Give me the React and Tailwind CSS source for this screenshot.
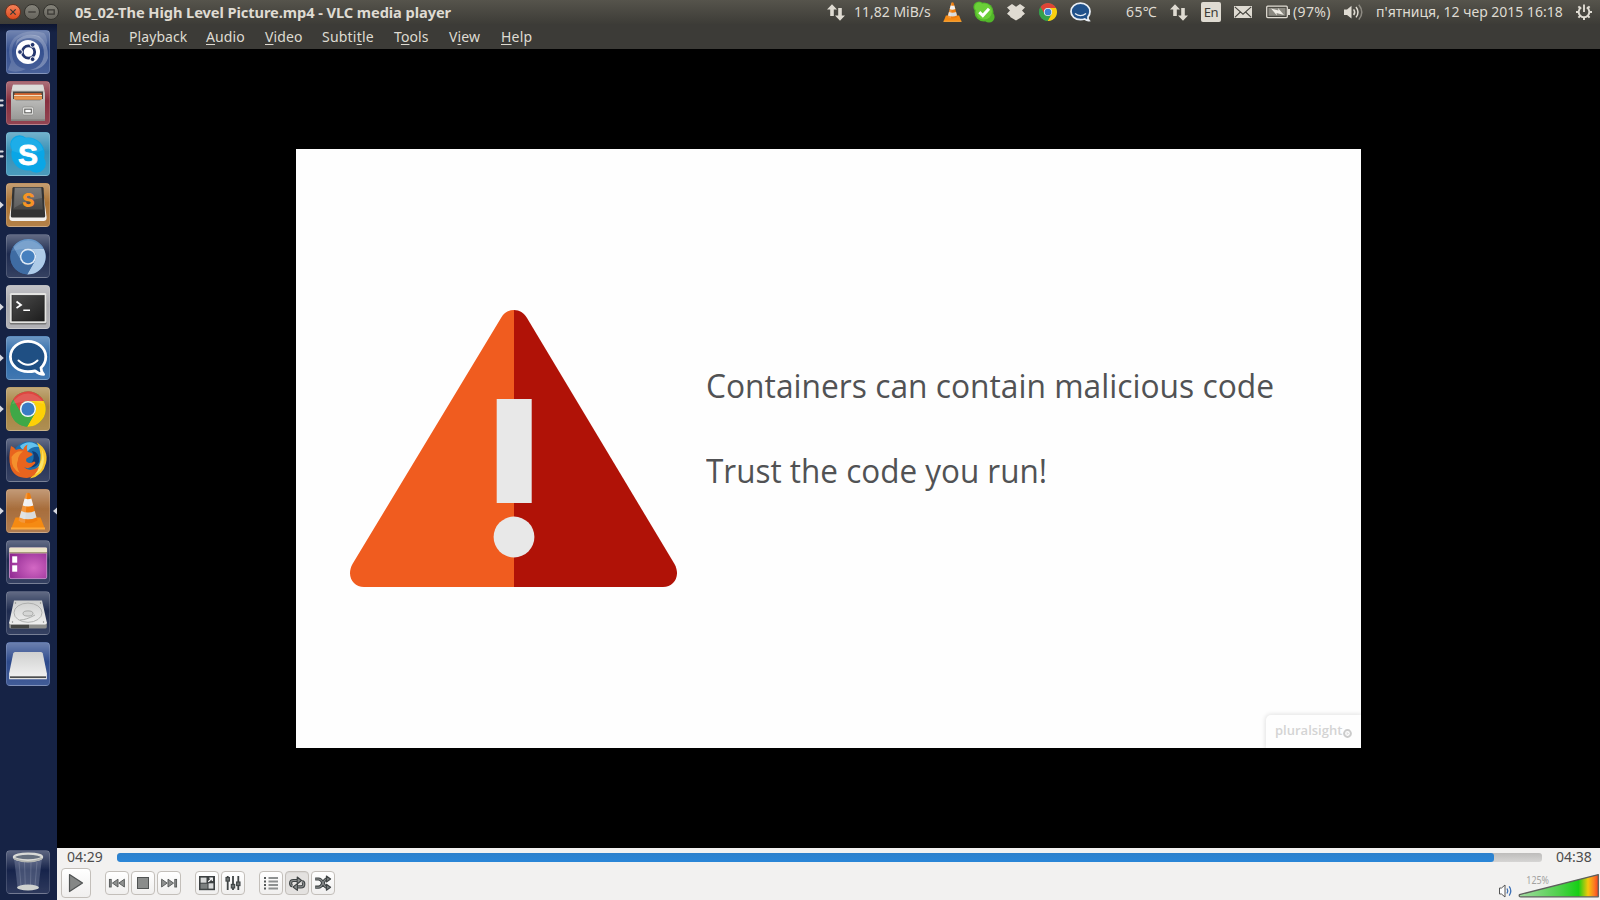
import React from "react";

const ink = "#dfdbd2";

/* ---------- shared drawings ---------- */

function ChromeMark({ colors, cx, cy, r }) {
  const k = r / 17.5;
  const d = "M-14.7 -9.5 A17.5 17.5 0 0 1 15.56 -8 L0 -8 A8 8 0 0 0 -6.9 4 Z";
  return (
    <g transform={`translate(${cx} ${cy}) scale(${k})`}>
      <circle r="17.4" fill={colors[2]} />
      <path d={d} fill={colors[0]} />
      <path d={d} fill={colors[1]} transform="rotate(120)" />
      <path d={d} fill={colors[2]} transform="rotate(240)" />
      <circle r="8" fill={colors[3]} />
      <circle r="6.5" fill={colors[4]} />
    </g>
  );
}

function Cone() {
  return (
    <g>
      <path d="M9.5 28.5 H34.5 L39 40 H5 Z" fill="#f58a12" />
      <path d="M5 38.6 H39 V40.6 H5 Z" fill="#ffab3d" />
      <path d="M20 4.5 Q22 2.8 24 4.5 L31.5 31.5 Q22 37 12.5 31.5 Z" fill="#f07d0c" />
      <path d="M18.6 9.5 Q22 11 25.4 9.5 L27.3 16.4 Q22 18.6 16.7 16.4 Z" fill="#f1f1f1" />
      <path d="M15.3 22 Q22 25 28.7 22 L30.5 28.4 Q22 32.3 13.5 28.4 Z" fill="#d9dcdd" />
      <path d="M20 4.5 Q21 3.5 21.5 3.7 L19 34 Q15 33.5 12.5 31.5 Z" fill="#fff" opacity=".2" />
    </g>
  );
}

/* ---------- launcher icons, each on a 44 x 44 grid ---------- */

const DashIcon = () => (
  <>
    <path d="M2 40 Q10 44 20 39 Q6 37 6 22 Q6 7 22 5 Q36 5 40 16 Q43 8 38 3 Q20 -2 8 8 Q0 18 5 32 Z" fill="#fff" opacity=".16" />
    <path d="M8 22 Q10 8 24 8 Q38 9 38 24 Q37 37 24 40 Q38 40 42 28 Q43 14 33 6 Q20 2 11 10 Z" fill="#fff" opacity=".28" />
    <circle cx="22" cy="22" r="12" fill="#fff" />
    <circle cx="22.5" cy="22" r="6.2" fill="none" stroke="#25376e" strokeWidth="2.8" />
    <g fill="#25376e" stroke="#fff" strokeWidth="1">
      <circle cx="14" cy="22" r="2.4" />
      <circle cx="26.6" cy="14.8" r="2.4" />
      <circle cx="26.6" cy="29.2" r="2.4" />
    </g>
  </>
);

const FilesIcon = () => (
  <>
    <path d="M7 3.8 H37 L39 12 V40 H5 V12 Z" fill="#c2c2c0" />
    <path d="M7 3.8 H37 L38.4 9.5 H5.6 Z" fill="#dcdcda" />
    <rect x="7" y="10.5" width="30" height="9" fill="#4a4642" />
    <rect x="8.5" y="12.2" width="27" height="2.4" fill="#d9682f" />
    <rect x="8" y="14" width="28" height="1.2" fill="#f3dcc0" />
    <rect x="8" y="15.2" width="28" height="3.6" fill="#ea924a" />
    <path d="M5 18 H8 L10 19.5 H34 L36 18 H39 V40 H5 Z" fill="url(#cabinet)" />
    <rect x="5" y="38.3" width="34" height="1.7" fill="#83827f" />
    <rect x="16.5" y="26" width="11" height="8" rx="1.5" fill="#dededc" stroke="#7f7f7d" strokeWidth=".6" />
    <rect x="18.8" y="28.2" width="6.5" height="3.6" fill="#fff" stroke="#555553" strokeWidth="1" />
  </>
);

const SkypeIcon = () => (
  <>
    <g fill="#0aa6e6">
      <circle cx="22" cy="22" r="16.6" />
      <circle cx="13.5" cy="12.5" r="9.3" />
      <circle cx="30.5" cy="31.5" r="9.3" />
    </g>
    <path d="M5 12 A9 9 0 0 1 19 6 A16 16 0 0 1 37 18 Q22 25 6 19 Z" fill="#fff" opacity=".08" />
    <text x="22" y="32.6" textAnchor="middle" fontSize="30" fontWeight="700" fill="#fff" stroke="#fff" strokeWidth=".8" fontFamily="'Liberation Sans', sans-serif">S</text>
  </>
);

const SublimeIcon = () => (
  <>
    <path d="M7.4 4.5 H36.6 L40.6 34 Q41 38 37.5 38 H6.5 Q3 38 3.4 34 Z" fill="#f2f0ed" />
    <path d="M7.8 4 H36.2 Q37.4 4 37.6 5.4 L39.2 33 Q39.2 34.6 37.6 34.6 H6.4 Q4.8 34.6 4.8 33 L6.4 5.4 Q6.6 4 7.8 4 Z" fill="#333" />
    <path d="M8.6 4.6 H35.4 L36.8 26.5 H7.2 Z" fill="url(#keyFace)" />
    <path d="M9 5 H35 L36 15 Q20 17 8 25 Z" fill="#fff" opacity=".12" />
    <text x="22.3" y="24" textAnchor="middle" fontSize="19" fontWeight="800" fill="#f79425" fontFamily="Inter, sans-serif">S</text>
  </>
);

const ChromiumIcon = () => (
  <>
    <ChromeMark cx={22} cy={22.7} r={17.7} colors={["#6896c7", "#aecbe8", "#3f6ca3", "#dfeaf6", "#4680bf"]} />
    <path d="M6 17 A17.5 17.5 0 0 1 38 17 Q22 12 6 17 Z" fill="#fff" opacity=".12" />
  </>
);

const TerminalIcon = () => (
  <>
    <rect x="3.7" y="8.5" width="36.8" height="31" rx="1.5" fill="#777" />
    <rect x="3.7" y="8" width="36.8" height="30" rx="1.5" fill="#e4e4e2" />
    <rect x="6" y="10.5" width="32.2" height="25.5" fill="url(#screen)" stroke="#1c1c1c" strokeWidth=".6" />
    <path d="M10.5 16.5 L15 20 L10.5 23" fill="none" stroke="#fff" strokeWidth="1.8" />
    <path d="M17.3 25.2 H24" stroke="#fff" strokeWidth="1.6" />
  </>
);

const HipChatIcon = () => (
  <>
    <path d="M22 5.4 C12.5 5.4 4.4 12 4.4 20.8 C4.4 29.6 12.5 35.6 22 35.6 Q26 35.6 29 34.8 Q33 38.4 37.6 38.4 Q35 35.6 35 31.8 Q39.8 27.4 39.8 20.8 C39.8 12 31.5 5.4 22 5.4 Z" fill="#1f4f83" stroke="#fff" strokeWidth="2.8" strokeLinejoin="round" />
    <path d="M12.5 24.5 Q22 33 31.5 24.5" fill="none" stroke="#fff" strokeWidth="2" strokeLinecap="round" />
  </>
);

const ChromeIcon = () => (
  <>
    <ChromeMark cx={22} cy={22} r={17.7} colors={["#dd4640", "#fdd007", "#3fa847", "#f7f7f7", "#3a7bc4"]} />
    <path d="M6 17 A17.5 17.5 0 0 1 38 17 Q22 12 6 17 Z" fill="#fff" opacity=".12" />
  </>
);

const FirefoxIcon = () => (
  <>
    <circle cx="23" cy="20" r="16.5" fill="#1b6fae" />
    <path d="M14 8 Q24 0 34 9 Q26 8 22 13 Q16 13 14 8 Z" fill="#62c2ee" />
    <path d="M26 13 Q34 14 33 24 Q30 31 22 29 Q31 21 26 13 Z" fill="#123c73" />
    <path d="M31 4.5 Q43 12 40 25 Q37 38 24 40.5 Q30 34 33 28 Q37 17 31 4.5 Z" fill="#f8c62b" />
    <path d="M35.5 10 Q38 20 33 28 Q28 35 20 35 Q30 40 36 30 Q40 21 35.5 10 Z" fill="#fbe56a" />
    <path d="M5 8 Q8 9 10 12 Q14 10 17 12 Q18 8 21.5 6.5 Q20 11 22 14 Q27 15 26.5 17 L20.5 20.5 Q19 24 23 25 Q26 25 28 23.5 Q31 24.5 27.5 27 Q23 32 18 29 Q23 35 33 29 Q30 39 21 40 Q8 40 4.5 29 Q2 20 5 8 Z" fill="#e8641e" />
    <path d="M5.5 19 Q10 12 17 13.5 Q12 17 12 22 Q9 28 14 35 Q5 31 5.5 19 Z" fill="#f4902d" />
  </>
);

const DesktopIcon = () => (
  <>
    <rect x="3.5" y="8" width="37.2" height="30.6" rx="1.5" fill="url(#purple)" stroke="#e8a4e2" strokeWidth=".7" />
    <rect x="3.2" y="7.6" width="37.8" height="5.6" rx="1" fill="#ece5c9" />
    <rect x="3.2" y="12" width="37.8" height="1.3" fill="#a89d7d" />
    <rect x="6.2" y="16.3" width="5" height="6.4" fill="#fff" />
    <rect x="6.2" y="25.3" width="5" height="6.4" fill="#fff" />
  </>
);

const HardDiskIcon = () => (
  <>
    <path d="M3.2 31 H40.8 V36 Q40.8 37.5 39 37.5 H5 Q3.2 37.5 3.2 36 Z" fill="#8d8e8c" />
    <path d="M8 9.5 H36 L40.8 31.5 Q41 33.5 39 33.5 H5 Q3 33.5 3.2 31.5 Z" fill="url(#metal)" />
    <rect x="5" y="33.8" width="18" height="3.4" fill="#454644" />
    <ellipse cx="22" cy="21.7" rx="14" ry="9.6" fill="none" stroke="#a3a5a3" strokeWidth=".8" />
    <ellipse cx="22" cy="22.5" rx="5" ry="2.6" fill="#d5d6d5" stroke="#999b99" strokeWidth=".8" />
    <path d="M14 29 Q20 29 29 24" fill="none" stroke="#a5a7a5" strokeWidth=".9" />
    <g fill="#858785">
      <circle cx="9.5" cy="12" r=".7" /><circle cx="34.5" cy="12" r=".7" />
      <circle cx="6.5" cy="31" r=".7" /><circle cx="37.5" cy="31" r=".7" />
    </g>
  </>
);

const RemovableIcon = () => (
  <>
    <path d="M3.2 32.5 H40.8 V37.2 H3.2 Z" fill="#f2f2f2" />
    <path d="M9 10 H35 Q36.4 10 36.8 11.5 L41 32 Q41 34 39 34 H5 Q3 34 3 32 L7.2 11.5 Q7.6 10 9 10 Z" fill="url(#metal)" />
    <rect x="4" y="34.3" width="36" height="1.8" fill="#4c4e4f" />
  </>
);

const TrashIcon = () => (
  <>
    <path d="M8 8 L11.5 37 Q22 43 32.5 37 L36 8 Z" fill="#a9b2cc" opacity=".3" />
    <path d="M13 12 L15 36 M18.5 12 L19.3 36 M25 12 L24.5 36 M31 12 L29 36" stroke="#dfe4f2" strokeWidth=".8" opacity=".22" />
    <ellipse cx="22" cy="37.5" rx="11" ry="3" fill="#cfd2cf" />
    <ellipse cx="22" cy="7" rx="14" ry="3.4" fill="#66707e" stroke="#d9dad6" strokeWidth="2.4" />
    <path d="M8 8.5 Q22 15 36 8.5" fill="none" stroke="#b4b6b2" strokeWidth="1.4" />
  </>
);

const launcher = [
  { name: "Dash", Icon: DashIcon, tile: "bg-[#35508f]", left: 0 },
  { name: "Files", Icon: FilesIcon, tile: "bg-[#87303f]", left: 2 },
  { name: "Skype", Icon: SkypeIcon, tile: "bg-[#3790b6]", left: 2 },
  { name: "Sublime Text", Icon: SublimeIcon, tile: "bg-[#ab7334]", left: 1 },
  { name: "Chromium", Icon: ChromiumIcon, tile: "bg-[#1f2c50]", left: 0 },
  { name: "Terminal", Icon: TerminalIcon, tile: "bg-[#a9a9ae]", left: 1 },
  { name: "HipChat", Icon: HipChatIcon, tile: "bg-[#2c69a9]", left: 1 },
  { name: "Chrome", Icon: ChromeIcon, tile: "bg-[#a68340]", left: 1 },
  { name: "Firefox", Icon: FirefoxIcon, tile: "bg-[#222f54]", left: 0 },
  { name: "VLC", Icon: Cone, tile: "bg-[#a86e3c]", left: 1, right: true },
  { name: "Desktop", Icon: DesktopIcon, tile: "bg-[#1f2c50]", left: 0 },
  { name: "Disk", Icon: HardDiskIcon, tile: "bg-[#1f2c50]", left: 0 },
  { name: "Removable", Icon: RemovableIcon, tile: "bg-[#2d4a8c]", left: 0 },
];

function LauncherItem({ Icon, tile, left, right }) {
  return (
    <div className="flex h-[44px] w-[57px] shrink-0 items-center">
      <svg className="h-[44px] w-[6px] shrink-0" viewBox="0 0 6 44">
        {left === 1 && <path d="M0 18.6 L3.8 22 L0 25.4 Z" fill="#d7d9e0" />}
        {left === 2 && <path d="M0 18.4 H3 L3.8 19.5 L3 20.6 H0 Z M0 23.2 H3 L3.8 24.3 L3 25.4 H0 Z" fill="#d7d9e0" />}
      </svg>
      <div className={`h-[44px] w-[44px] shrink-0 overflow-hidden rounded-[4px] ${tile}`}>
        <div className="h-[44px] w-[44px] rounded-[4px] border border-white/15 bg-linear-to-b from-white/30 via-white/0 via-45% to-white/10">
          <svg className="-m-px h-[44px] w-[44px]" viewBox="0 0 44 44"><Icon /></svg>
        </div>
      </div>
      <svg className="h-[44px] w-[7px] shrink-0" viewBox="0 0 7 44">
        {right && <path d="M7 18.6 L3 22 L7 25.4 Z" fill="#d7d9e0" />}
      </svg>
    </div>
  );
}

function Launcher() {
  return (
    <div className="flex w-[57px] shrink-0 flex-col justify-between bg-linear-to-b from-[#0d1530] from-0% to-[#162345] to-1% pt-[6px] pb-[6px]">
      <div className="flex flex-col gap-[7px]">
        {launcher.map((it) => <LauncherItem key={it.name} {...it} />)}
      </div>
      <LauncherItem Icon={TrashIcon} tile="bg-[#17244b]" left={0} />
    </div>
  );
}

/* ---------- top panel ---------- */

function NetArrows() {
  return (
    <svg className="h-[24px] w-[18px] shrink-0" viewBox="0 0 18 24" fill={ink}>
      <path d="M5 4.2 L10 9.4 H6.8 V16 H3.2 V9.4 H0 Z" />
      <path d="M13 20.8 L18 15.6 H14.8 V8 H11.2 V15.6 H8 Z" />
    </svg>
  );
}

const windowButtons = [
  { k: "close", cls: "bg-linear-to-b from-[#f58157] to-[#dd4a1b] border-[#6d3320]", d: "M5 5 L10 10 M10 5 L5 10" },
  { k: "min", cls: "bg-linear-to-b from-[#85837a] to-[#66645d] border-[#34332e]", d: "M4 7.5 H11" },
  { k: "max", cls: "bg-linear-to-b from-[#85837a] to-[#66645d] border-[#34332e]", d: "M4.5 5.5 H10.5 V9.5 H4.5 Z" },
];

function TopPanel() {
  return (
    <div className="flex h-[24px] w-[1600px] shrink-0 items-center bg-linear-to-b from-[#56544c] to-[#3d3c37] text-[14px] leading-[24px] whitespace-nowrap text-[#dfdbd2]">
      <div className="flex w-[75px] shrink-0 gap-[3px] pl-[5px]">
        {windowButtons.map((b) => (
          <div key={b.k} className={`h-[16px] w-[16px] rounded-full border ${b.cls}`}>
            <svg className="-m-px h-[16px] w-[16px]" viewBox="0 0 15 15"><path d={b.d} fill="none" stroke="#3a3834" strokeWidth="1.2" /></svg>
          </div>
        ))}
      </div>
      <div className="w-[752px] shrink-0 text-[14.67px] font-bold tracking-[-0.09px]">05_02-The High Level Picture.mp4 - VLC media player</div>
      <div className="w-[27px] shrink-0"><NetArrows /></div>
      <div className="w-[89px] shrink-0">11,82 MiB/s</div>
      <div className="w-[30px] shrink-0">
        <svg className="h-[22px] w-[19px]" viewBox="4 2 36 40"><Cone /></svg>
      </div>
      <div className="w-[34px] shrink-0">
        <svg className="h-[24px] w-[22px]" viewBox="0 0 22 24">
          <g fill="#52b82a"><circle cx="11" cy="12" r="9.5" /><circle cx="6" cy="7" r="5.6" /><circle cx="16" cy="17" r="5.6" /></g>
          <g fill="#6bcf38"><circle cx="11" cy="11.5" r="8" /><circle cx="6" cy="7" r="4.4" /></g>
          <path d="M6.3 12.2 L9.8 15.6 L16 8.8" fill="none" stroke="#fff" strokeWidth="3" />
        </svg>
      </div>
      <div className="w-[32px] shrink-0">
        <svg className="h-[24px] w-[18px]" viewBox="0 0 18 24" fill={ink}>
          <path d="M5 4 L9 6.8 L13 4 L18 7.6 L15 10.6 L18 13.8 L14.8 16.2 V17 L9 20.6 L3.2 17 V16.2 L0 13.8 L3 10.6 L0 7.6 Z" />
        </svg>
      </div>
      <div className="w-[31px] shrink-0">
        <svg className="h-[24px] w-[18px]" viewBox="0 0 18 24">
          <ChromeMark cx={9} cy={12} r={9} colors={["#dd4437", "#fbcf0f", "#35a04a", "#f7f7f7", "#3b7fd0"]} />
        </svg>
      </div>
      <div className="w-[56px] shrink-0">
        <svg className="h-[24px] w-[22px]" viewBox="0 0 22 24">
          <path d="M10.5 3.2 C5 3.2 1 6.8 1 11.5 C1 16.2 5 19.6 10.5 19.6 Q13 19.6 14.6 19 Q17 20.8 19 20.6 Q17.6 19 18 16.8 Q20 14.6 20 11.5 C20 6.8 16 3.2 10.5 3.2 Z" fill="#20518a" stroke="#e9eef4" strokeWidth="1.8" />
          <path d="M5 13.4 Q10.5 18 16 13.4" fill="none" stroke="#e9eef4" strokeWidth="1.3" />
        </svg>
      </div>
      <div className="w-[44px] shrink-0 tracking-[0.4px]">65℃</div>
      <div className="w-[31px] shrink-0"><NetArrows /></div>
      <div className="w-[33px] shrink-0">
        <div className="flex h-[20px] w-[20px] items-center justify-center rounded-[2px] bg-[#dfdbd2] text-[13px] tracking-[-0.5px] text-[#3c3b37]">En</div>
      </div>
      <div className="w-[32px] shrink-0">
        <svg className="h-[24px] w-[18px]" viewBox="0 0 18 24">
          <rect y="6" width="18" height="12" fill={ink} />
          <path d="M.8 6.8 L9 14.2 L17.2 6.8 M.8 17.4 L6.4 12 M17.2 17.4 L11.6 12" fill="none" stroke="#45443e" strokeWidth="1.1" />
        </svg>
      </div>
      <div className="w-[27px] shrink-0">
        <svg className="h-[24px] w-[24px]" viewBox="0 0 24 24">
          <rect x=".7" y="6.2" width="20.6" height="11.4" rx="1" fill="none" stroke={ink} strokeWidth="1.3" />
          <rect x="2.5" y="8" width="17" height="7.8" fill="#8b8981" />
          <rect x="22" y="9" width="2" height="6" fill={ink} />
          <path d="M5 8.6 L12.5 10.4 L12 8 L18 15 L10.5 13 L11 15.4 Z" fill="#efece5" />
        </svg>
      </div>
      <div className="w-[51px] shrink-0 tracking-[0.35px]">(97%)</div>
      <div className="w-[32px] shrink-0">
        <svg className="h-[24px] w-[20px]" viewBox="0 0 20 24">
          <path d="M0 9.5 H3 L7.5 5.8 V18.6 L3 15 H0 Z" fill={ink} />
          <path d="M9.6 9.4 Q11.8 12.2 9.6 15" fill="none" stroke={ink} strokeWidth="1.5" />
          <path d="M12 7 Q16 12.2 12 17.4" fill="none" stroke={ink} strokeWidth="1.5" />
          <path d="M14.8 4.8 Q20.8 12.2 14.8 19.6" fill="none" stroke="#8d8a82" strokeWidth="1.5" />
        </svg>
      </div>
      <div className="w-[200px] shrink-0">п'ятниця, 12 чер 2015 16:18</div>
      <svg className="h-[24px] w-[16px] shrink-0" viewBox="0 0 16 24" fill="none" stroke={ink}>
        <path d="M5.2 7.4 A5.3 5.3 0 1 0 10.8 7.4" strokeWidth="1.9" />
        <path d="M8 4.5 V12" strokeWidth="1.9" />
        <path d="M8 17.2 V20 M13 12 H16 M0 12 H3 M11.7 15.7 L13.6 17.6 M4.3 15.7 L2.4 17.6 M4.3 8.3 L2.4 6.4 M11.7 8.3 L13.6 6.4" strokeWidth="2" />
      </svg>
    </div>
  );
}

/* ---------- VLC window ---------- */

const menus = [
  { pre: "", key: "M", post: "edia", cls: "w-[60px]" },
  { pre: "P", key: "l", post: "ayback", cls: "w-[77px] tracking-[0.08px]" },
  { pre: "", key: "A", post: "udio", cls: "w-[59px] tracking-[0.1px]" },
  { pre: "", key: "V", post: "ideo", cls: "w-[57px] tracking-[0.1px]" },
  { pre: "Subti", key: "t", post: "le", cls: "w-[72px] tracking-[0.2px]" },
  { pre: "T", key: "o", post: "ols", cls: "w-[55px] tracking-[0.1px]" },
  { pre: "V", key: "i", post: "ew", cls: "w-[52px] tracking-[0.1px]" },
  { pre: "", key: "H", post: "elp", cls: "w-[40px] tracking-[0.2px]" },
];

function MenuBar() {
  return (
    <div className="flex h-[25px] shrink-0 bg-[#3c3b37] pl-[12px] text-[14px] leading-[25px] whitespace-nowrap text-[#dfdbd2]">
      {menus.map((m) => (
        <div key={m.pre + m.key + m.post} className={`shrink-0 ${m.cls}`}>
          {m.pre}
          <span className="underline decoration-1 underline-offset-[2px] [text-decoration-skip-ink:none]">{m.key}</span>
          {m.post}
        </div>
      ))}
    </div>
  );
}

function Slide() {
  return (
    <div className="flex h-[599px] w-[1065px] overflow-hidden bg-[#fefefe]">
      <div className="w-[410px] shrink-0 pt-[161px] pl-[54px]">
        <svg className="h-[277px] w-[327px]" viewBox="0 0 327 277">
          <path d="M164 0 C158.5 0 154 3 151.3 7.5 L2.5 254 C-4 266 3 277 14 277 H164 Z" fill="#f05c1f" />
          <path d="M164 0 C169.5 0 174 3 176.7 7.5 L324.5 254 C331 266 324 277 313 277 H164 Z" fill="#b01207" />
          <rect x="146.7" y="89" width="35" height="104" fill="#e8e8e8" />
          <circle cx="164" cy="227" r="20.4" fill="#e8e8e8" />
        </svg>
      </div>
      <div className="flex w-[655px] shrink-0 flex-col justify-between">
        <div className="pt-[217px] font-['Open_Sans',sans-serif] text-[33px] leading-[40px] whitespace-nowrap text-[#515254]">
          <div className="w-max origin-left scale-x-[0.962]">Containers can contain malicious code</div>
          <div className="mt-[45px] w-max origin-left scale-x-[0.953]">Trust the code you run!</div>
        </div>
        <div className="flex h-[33px] w-[95px] items-start gap-px self-end rounded-tl-[5px] pt-[5px] pl-[9px] font-['Open_Sans',sans-serif] text-[13px] font-semibold leading-[20px] text-[#d4d4d4] shadow-[0_0_4px_1px_#e3e3e3]">
          <span>pluralsight</span>
          <svg className="mt-[9px] h-[9px] w-[9px] shrink-0" viewBox="0 0 9 9">
            <circle cx="4.5" cy="4.5" r="3.4" fill="none" stroke="#cbcbcb" strokeWidth="2" />
            <path d="M3.6 2.8 L6.2 4.5 L3.6 6.2 Z" fill="#dedede" />
          </svg>
        </div>
      </div>
    </div>
  );
}

const icons = {
  prev: (
    <g fill="#8f9190" stroke="#505353" strokeWidth=".9">
      <rect x="4.4" y="8.4" width="1.8" height="7.6" /><path d="M13 8.2 V16 L7.4 12.1 Z" /><path d="M19.4 8.2 V16 L13.8 12.1 Z" />
    </g>
  ),
  stop: <rect x="6.5" y="6.5" width="11" height="11" fill="#8a8c8b" stroke="#505353" />,
  next: (
    <g fill="#8f9190" stroke="#505353" strokeWidth=".9">
      <rect x="17.8" y="8.4" width="1.8" height="7.6" /><path d="M11 8.2 V16 L16.6 12.1 Z" /><path d="M4.6 8.2 V16 L10.2 12.1 Z" />
    </g>
  ),
  full: (
    <g>
      <rect x="4.8" y="5.8" width="14.4" height="12.6" fill="#d9dada" stroke="#3d4142" strokeWidth="1.6" />
      <rect x="11.5" y="5.5" width="8" height="6.8" fill="#3d4142" />
      <path d="M13.3 10.8 L16.6 7.6 M14.4 7.2 H17.3 V10" fill="none" stroke="#fff" strokeWidth="1.2" />
      <rect x="5" y="12.2" width="8" height="6" fill="#7c8080" stroke="#3d4142" />
    </g>
  ),
  eq: (
    <g stroke="#3f4445" strokeWidth="1.8">
      <path d="M6.7 5 V19 M12 5 V19 M17.3 5 V19" />
      <g fill="#6d7272" strokeWidth="1.1"><rect x="5" y="6.5" width="3.4" height="3.6" /><rect x="10.3" y="13.4" width="3.4" height="3.6" /><rect x="15.6" y="11" width="3.4" height="3.6" /></g>
    </g>
  ),
  list: (
    <g fill="none">
      <path d="M5 7 H7 M5 10.5 H7 M5 14 H7 M5 17.5 H7" strokeWidth="1.8" stroke="#55595a" />
      <path d="M9.5 7 H19 M9.5 10.5 H19 M9.5 14 H19 M9.5 17.5 H19" strokeWidth="1.9" stroke="#8d9090" />
    </g>
  ),
  loop: (
    <g strokeLinejoin="round">
      <path d="M12 9.5 H8.4 Q5.6 9.5 5.6 12.2 Q5.6 14.4 7.4 14.8 M12 15.9 H16 Q18.8 15.9 18.8 13 Q18.8 11 17 10.6" fill="none" stroke="#3f4445" strokeWidth="3.2" />
      <path d="M12 9.5 H8.4 Q5.6 9.5 5.6 12.2 Q5.6 14.4 7.4 14.8 M12 15.9 H16 Q18.8 15.9 18.8 13 Q18.8 11 17 10.6" fill="none" stroke="#8b8e8e" strokeWidth="1.1" />
      <path d="M12.2 6 L16.6 9.5 L12.2 13 Z M12.4 12.6 L8 16 L12.4 19.4 Z" fill="#8b8e8e" stroke="#3f4445" strokeWidth="1.1" />
    </g>
  ),
  shuffle: (
    <g fill="none" strokeLinejoin="round">
      <path d="M4.2 8 H7.5 Q10 8 12 12 Q14 16.2 16 16.2 M4.2 16.2 H7.5 Q10 16.2 12 12 Q14 8 16 8" stroke="#3f4445" strokeWidth="3.2" />
      <path d="M4.8 8 H7.5 Q10 8 12 12 Q14 16.2 16 16.2 M4.8 16.2 H7.5 Q10 16.2 12 12 Q14 8 16 8" stroke="#8b8e8e" strokeWidth="1.1" />
      <path d="M15.4 5 L19.6 8 L15.4 11 Z M15.4 13.2 L19.6 16.2 L15.4 19.2 Z" fill="#7b7f7f" stroke="#3f4445" strokeWidth="1.1" />
    </g>
  ),
};

function Btn({ icon, active }) {
  return (
    <div className={`h-[24px] w-[24px] shrink-0 rounded-[4px] border border-[#c3bfba] ${active ? "bg-[#e4e2e0] inset-shadow-xs" : "bg-linear-to-b from-white to-[#f0efee]"}`}>
      <svg className="-m-px h-[24px] w-[24px]" viewBox="0 0 24 24">{icons[icon]}</svg>
    </div>
  );
}

function Controls() {
  return (
    <div className="flex h-[52px] shrink-0 flex-col bg-[#f2f1f0] text-[#4c4c4c]">
      <div className="flex h-[18px] items-center pl-[10px] text-[14px] leading-[18px]">
        <div className="w-[50px] shrink-0">04:29</div>
        <div className="mr-[14px] h-[9px] w-[1425px] shrink-0 overflow-hidden rounded-[3px] bg-linear-to-b from-[#bdbcbb] to-[#d6d5d4]">
          <div className="h-[9px] w-[1377px] rounded-[3px] bg-linear-to-b from-[#2c80cc] to-[#2a86d8]" />
        </div>
        <div className="shrink-0">04:38</div>
      </div>
      <div className="flex h-[34px] items-center pl-[4px]">
        <div className="mr-[14px] h-[30px] w-[30px] shrink-0 rounded-[4px] border border-[#c3bfba] bg-linear-to-b from-white to-[#f0efee]">
          <svg className="-m-px h-[30px] w-[30px]" viewBox="0 0 30 30">
            <path d="M8.5 6.5 L21.5 15 L8.5 23.5 Z" fill="#858786" stroke="#505353" strokeWidth="1.2" strokeLinejoin="round" />
          </svg>
        </div>
        <div className="mr-[14px] flex gap-[2px]"><Btn icon="prev" /><Btn icon="stop" /><Btn icon="next" /></div>
        <div className="mr-[14px] flex gap-[2px]"><Btn icon="full" /><Btn icon="eq" /></div>
        <div className="flex gap-[2px]"><Btn icon="list" /><Btn icon="loop" active /><Btn icon="shuffle" /></div>
        <svg className="ml-auto h-[34px] w-[103px] shrink-0" viewBox="0 0 103 34">
          <g transform="translate(0 6)">
            <path d="M2.5 16 H4.5 L8 13 V25 L4.5 22 H2.5 Z" fill="#fdfdfd" stroke="#555" strokeWidth="1" />
            <path d="M10 16.5 Q11.6 19 10 21.5 M12.2 14.4 Q15.4 19 12.2 23.6" fill="none" stroke="#3b6fb6" strokeWidth="1.3" />
          </g>
          <path d="M22.5 28.6 Q21.5 30.8 24 30.8 H101.3 V8.6 Z" fill="url(#volume)" stroke="#5d5f5c" strokeWidth="1.3" strokeLinejoin="round" />
          <text x="29.3" y="18" fontSize="10" fill="#a3a2a0" textLength="22.7" lengthAdjust="spacingAndGlyphs" fontFamily="'Noto Sans', sans-serif">125%</text>
        </svg>
      </div>
    </div>
  );
}

function Gradients() {
  return (
    <svg className="absolute h-0 w-0" aria-hidden="true">
      <defs>
        <linearGradient id="cabinet" x1="0" y1="0" x2="0" y2="1"><stop offset="0" stopColor="#bcbcba" /><stop offset="1" stopColor="#969694" /></linearGradient>
        <linearGradient id="keyFace" x1="0" y1="0" x2="0" y2="1"><stop offset="0" stopColor="#686868" /><stop offset="1" stopColor="#474747" /></linearGradient>
        <linearGradient id="screen" x1="0" y1="0" x2="1" y2="1"><stop offset="0" stopColor="#4c4c4c" /><stop offset="1" stopColor="#1d1d1d" /></linearGradient>
        <radialGradient id="purple" cx=".65" cy=".65" r=".75"><stop offset="0" stopColor="#d368c4" /><stop offset="1" stopColor="#8d2790" /></radialGradient>
        <linearGradient id="metal" x1="0" y1="0" x2="0" y2="1"><stop offset="0" stopColor="#cfd0cf" /><stop offset="1" stopColor="#efefef" /></linearGradient>
        <linearGradient id="volume" x1="0" y1="0" x2="1" y2="0">
          <stop offset="0" stopColor="#a4dba2" /><stop offset=".5" stopColor="#4fd04c" /><stop offset=".75" stopColor="#16cf16" />
          <stop offset=".87" stopColor="#f5c70c" /><stop offset=".95" stopColor="#fb7a22" /><stop offset="1" stopColor="#f8401f" />
        </linearGradient>
      </defs>
    </svg>
  );
}

export default function App() {
  return (
    <div className="flex h-[900px] w-[1600px] flex-col overflow-hidden bg-black font-['Noto_Sans',sans-serif]">
      <Gradients />
      <TopPanel />
      <div className="flex h-[876px]">
        <Launcher />
        <div className="flex w-[1543px] flex-col">
          <MenuBar />
          <div className="flex h-[799px] shrink-0 items-center bg-black pl-[239px]">
            <Slide />
          </div>
          <Controls />
        </div>
      </div>
    </div>
  );
}
